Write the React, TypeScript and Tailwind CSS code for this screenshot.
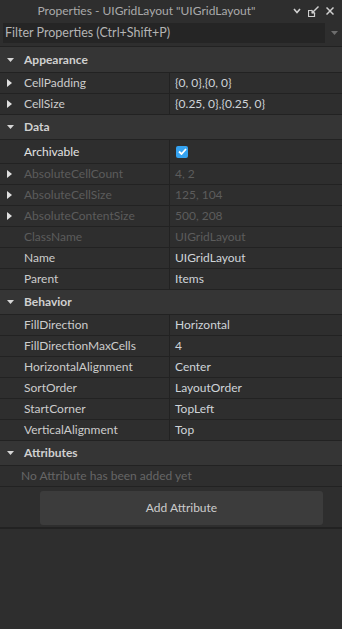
import React from "react";

type Row = {
  name: string;
  value?: string;
  expand?: boolean;
  disabled?: boolean;
  check?: boolean;
  tall?: boolean;
  bright?: boolean;
};

type Section = { title: string; rows: Row[]; first?: boolean };

const sections: Section[] = [
  {
    title: "Appearance",
    first: true,
    rows: [
      { name: "CellPadding", value: "{0, 0},{0, 0}", expand: true },
      { name: "CellSize", value: "{0.25, 0},{0.25, 0}", expand: true },
    ],
  },
  {
    title: "Data",
    rows: [
      { name: "Archivable", check: true, tall: true, bright: true },
      { name: "AbsoluteCellCount", value: "4, 2", expand: true, disabled: true },
      { name: "AbsoluteCellSize", value: "125, 104", expand: true, disabled: true },
      { name: "AbsoluteContentSize", value: "500, 208", expand: true, disabled: true },
      { name: "ClassName", value: "UIGridLayout", disabled: true },
      { name: "Name", value: "UIGridLayout" },
      { name: "Parent", value: "Items" },
    ],
  },
  {
    title: "Behavior",
    rows: [
      { name: "FillDirection", value: "Horizontal" },
      { name: "FillDirectionMaxCells", value: "4" },
      { name: "HorizontalAlignment", value: "Center" },
      { name: "SortOrder", value: "LayoutOrder" },
      { name: "StartCorner", value: "TopLeft" },
      { name: "VerticalAlignment", value: "Top" },
    ],
  },
];

function DownTri() {
  return (
    <svg width="7" height="4" viewBox="0 0 7 4" className="block">
      <polygon points="0,0 7,0 3.5,4" fill="#d6d6d6" />
    </svg>
  );
}

function RightTri() {
  return (
    <svg width="5" height="8" viewBox="0 0 5 8" className="block">
      <polygon points="0,0 5,4 0,8" fill="#e0e0e0" />
    </svg>
  );
}

function Header({ title, first }: { title: string; first?: boolean }) {
  return (
    <div
      className={
        "flex items-center bg-[#353535] border-b border-[#222222] " +
        (first ? "h-[26px]" : "h-[25px]")
      }
    >
      <div className="w-[24px] pl-[7px] flex items-center">
        <DownTri />
      </div>
      <span className="font-bold text-[12px] text-[#d0d0d0]">{title}</span>
    </div>
  );
}

function PropRow({ row }: { row: Row }) {
  const textColor = row.disabled
    ? "text-[#5c5c5c]"
    : row.bright
    ? "text-[#e2e2e2]"
    : "text-[#cccccc]";
  return (
    <div
      className={
        "flex border-b border-[#222222] " + (row.tall ? "h-[24px]" : "h-[21px]")
      }
    >
      <div className="w-[170px] flex items-center border-r border-[#222222]">
        <div className="w-[24px] pl-[7px] flex items-center">
          {row.expand ? <RightTri /> : null}
        </div>
        <span className={textColor}>{row.name}</span>
      </div>
      <div className="flex-1 flex items-center pl-[5px]">
        {row.check ? (
          <div className="ml-[1px] w-[12px] h-[12px] rounded-[2px] bg-[#35a3f1] flex items-center justify-center">
            <svg width="9" height="7" viewBox="0 0 9 7">
              <polyline
                points="1,3.5 3.5,6 8,1"
                fill="none"
                stroke="#ffffff"
                strokeWidth="1.8"
              />
            </svg>
          </div>
        ) : (
          <span className={row.disabled ? "text-[#5c5c5c]" : "text-[#cfd4d9]"}>
            {row.value}
          </span>
        )}
      </div>
    </div>
  );
}

export default function App() {
  return (
    <div className="w-[342px] h-[629px] bg-[#2e2e2e] [font-family:Lato,sans-serif] text-[12px] text-[#cccccc] flex flex-col overflow-hidden">
      {/* Title bar */}
      <div className="h-[22px] flex items-center">
        <div className="w-[293px] text-center text-[12px] text-[#aaaaaa] leading-none">
          Properties - UIGridLayout "UIGridLayout"
        </div>
        <div className="flex items-center">
          <svg width="8" height="6" viewBox="0 0 8 6" className="block">
            <polyline points="1,1 4,4.5 7,1" fill="none" stroke="#d0d0d0" strokeWidth="1.6" />
          </svg>
          <svg width="11" height="11" viewBox="0 0 11 11" className="block ml-[7px]">
            <polyline points="4.5,4.5 0.5,4.5 0.5,10.5 6.5,10.5 6.5,6.5" fill="none" stroke="#d0d0d0" strokeWidth="1.2" />
            <line x1="10.5" y1="0.5" x2="4" y2="7" stroke="#d0d0d0" strokeWidth="1.4" />
            <polygon points="3.5,3.5 3.5,7.5 7.5,7.5" fill="#d0d0d0" />
          </svg>
          <svg width="8" height="8" viewBox="0 0 8 8" className="block ml-[7px]">
            <line x1="0.5" y1="0.5" x2="7.5" y2="7.5" stroke="#d0d0d0" strokeWidth="1.5" />
            <line x1="7.5" y1="0.5" x2="0.5" y2="7.5" stroke="#d0d0d0" strokeWidth="1.5" />
          </svg>
        </div>
      </div>

      {/* Filter */}
      <div className="h-[24px] flex items-start pt-[1px] pl-[3px]">
        <div className="w-[322px] h-[20px] bg-[#252525] flex items-center pl-[2px] text-[12.5px] text-[#b4b4b4]">
          Filter Properties (Ctrl+Shift+P)
        </div>
        <div className="flex-1 h-[20px] flex items-center justify-center pl-[1px]">
          <svg width="7" height="4" viewBox="0 0 7 4" className="block">
            <polygon points="0,0 7,0 3.5,4" fill="#6e6e6e" />
          </svg>
        </div>
      </div>

      {/* Property list */}
      <div className="border-t border-[#222222] flex flex-col">
        {sections.map((s) => (
          <React.Fragment key={s.title}>
            <Header title={s.title} first={s.first} />
            {s.rows.map((r) => (
              <PropRow key={r.name} row={r} />
            ))}
          </React.Fragment>
        ))}
        <Header title="Attributes" />
        <div className="h-[21px] flex items-center pl-[21px] border-b border-[#222222] text-[#666666]">
          No Attribute has been added yet
        </div>
        <div className="h-[42px] pt-[4px] pl-[40px] pr-[19px] border-b-2 border-[#222222]">
          <div className="h-[34px] rounded-[3px] bg-[#3c3c3c] flex items-center justify-center text-[#cccccc]">
            Add Attribute
          </div>
        </div>
      </div>
    </div>
  );
}
